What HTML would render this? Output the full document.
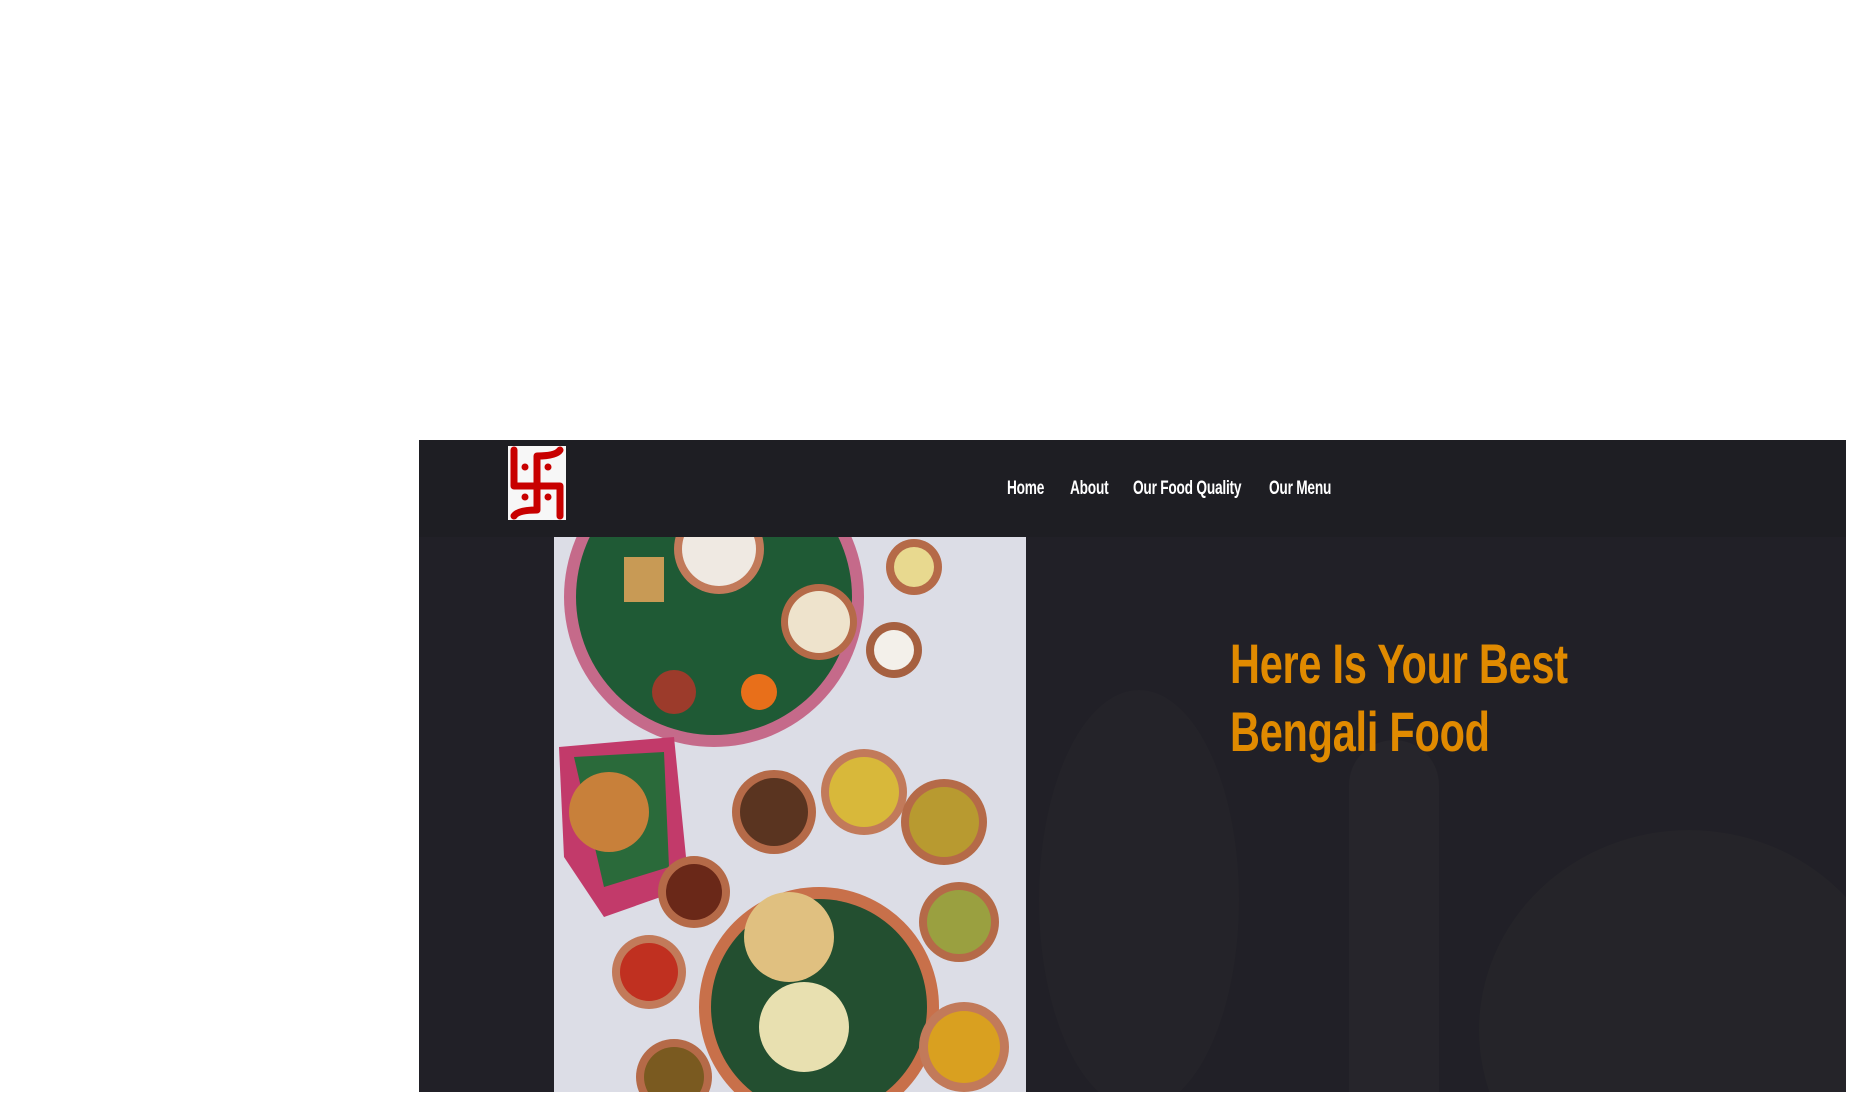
<!DOCTYPE html>
<html><head><meta charset="utf-8"><style>
html,body{margin:0;padding:0;background:#fff;width:1850px;height:1106px;overflow:hidden;font-family:"Liberation Sans",sans-serif;position:relative}
#hero{position:absolute;left:419px;top:440px;width:1427px;height:652px;background:#212027;overflow:hidden}
#nav{position:absolute;left:0;top:0;width:100%;height:97px;background:#1e1e23}
#logo{position:absolute;left:89px;top:6px;width:58px;height:74px;background:#f7f7f7}
.nl{position:absolute;top:38px;color:#fff;font-size:19px;font-weight:bold;transform:scaleX(.72);transform-origin:left top;white-space:nowrap;letter-spacing:-.3px}
#food{position:absolute;left:135px;top:97px;width:472px;height:555px;background:#dcdde6;overflow:hidden}
h1{position:absolute;left:811px;top:190px;margin:0;color:#e08a00;font-size:56px;line-height:68px;font-weight:bold;transform:scaleX(.74);transform-origin:left top;white-space:nowrap;letter-spacing:-.3px;overflow:hidden}
.bg{position:absolute;border-radius:50%}
</style></head><body>
<div id="hero">
 <div class="bg" style="left:930px;top:300px;width:90px;height:400px;background:#26252b;border-radius:45px"></div>
 <div class="bg" style="left:1060px;top:390px;width:420px;height:400px;background:#252429"></div>
 <div class="bg" style="left:620px;top:250px;width:200px;height:420px;background:#242329"></div>
 <div id="nav">
  <div id="logo"><svg width="58" height="74" viewBox="0 0 58 74"><g fill="none" stroke="#c80000" stroke-width="7" stroke-linecap="round" stroke-linejoin="round"><path d="M6 4 V40 H52 V70"/><path d="M52 4 Q48 10 29 10 V64 Q10 64 6 70"/></g><g fill="#c80000"><circle cx="17" cy="21" r="3.5"/><circle cx="40" cy="21" r="3.5"/><circle cx="17" cy="51" r="3.5"/><circle cx="40" cy="51" r="3.5"/></g></svg></div>
  <div class="nl" style="left:588px">Home</div>
  <div class="nl" style="left:651px">About</div>
  <div class="nl" style="left:714px">Our Food Quality</div>
  <div class="nl" style="left:850px">Our Menu</div>
 </div>
 <div id="food"><svg width="472" height="555" viewBox="0 0 472 555">
  <circle cx="160" cy="60" r="150" fill="#c56a8a"/><circle cx="160" cy="60" r="138" fill="#1f5a35"/>
  <circle cx="165" cy="12" r="45" fill="#c27a5a"/><circle cx="165" cy="12" r="37" fill="#efe9e2"/>
  <circle cx="265" cy="85" r="38" fill="#b56a48"/><circle cx="265" cy="85" r="31" fill="#eee3cc"/>
  <circle cx="360" cy="30" r="28" fill="#b56a48"/><circle cx="360" cy="30" r="20" fill="#e8d98f"/>
  <circle cx="340" cy="113" r="28" fill="#a66040"/><circle cx="340" cy="113" r="20" fill="#f3f0ea"/>
  <circle cx="120" cy="155" r="22" fill="#9c3b2b"/><circle cx="205" cy="155" r="18" fill="#e86f1a"/>
  <rect x="70" y="20" width="40" height="45" fill="#c89a55"/>
  <path d="M5 210 L120 200 L135 350 L50 380 L10 320Z" fill="#c23a6a"/><path d="M20 220 L110 215 L115 330 L50 350Z" fill="#2a6a3a"/>
  <circle cx="55" cy="275" r="40" fill="#c8803a"/>
  <circle cx="220" cy="275" r="42" fill="#b56a48"/><circle cx="220" cy="275" r="34" fill="#5a3420"/>
  <circle cx="310" cy="255" r="43" fill="#c27a5a"/><circle cx="310" cy="255" r="35" fill="#d8b83a"/>
  <circle cx="390" cy="285" r="43" fill="#b56a48"/><circle cx="390" cy="285" r="35" fill="#b89a30"/>
  <circle cx="140" cy="355" r="36" fill="#b56a48"/><circle cx="140" cy="355" r="28" fill="#6a2818"/>
  <circle cx="265" cy="470" r="120" fill="#c8704a"/><circle cx="265" cy="470" r="108" fill="#234f30"/>
  <circle cx="235" cy="400" r="45" fill="#e0c080"/><circle cx="250" cy="490" r="45" fill="#e8e0b0"/>
  <circle cx="405" cy="385" r="40" fill="#b56a48"/><circle cx="405" cy="385" r="32" fill="#9aa040"/>
  <circle cx="95" cy="435" r="37" fill="#c27a5a"/><circle cx="95" cy="435" r="29" fill="#c03020"/>
  <circle cx="410" cy="510" r="45" fill="#c27a5a"/><circle cx="410" cy="510" r="36" fill="#d9a020"/>
  <circle cx="120" cy="540" r="38" fill="#b56a48"/><circle cx="120" cy="540" r="30" fill="#7a5a20"/>
 </svg></div>
 <h1>Here Is Your Best<br>Bengali Food</h1>
</div>
</body></html>
